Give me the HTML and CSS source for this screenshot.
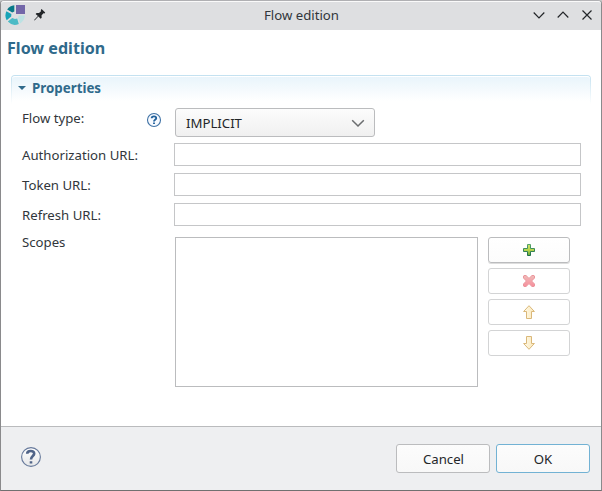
FILE: index.html
```html
<!DOCTYPE html>
<html lang="en">
<head>
<meta charset="utf-8">
<title>Flow edition</title>
<link rel="stylesheet" href="styles.css">
</head>
<body>
<div class="window">
  <header class="titlebar">
    <div class="title-left">
      <svg class="logo" width="20" height="20" viewBox="0 0 20 20">
        <path d="M2.2 4.4A9.8 9.8 0 0 1 9.3 .2V6.4L7.2 7.6Z" fill="#087988"/>
        <path d="M1.4 6.2L6.4 9L6.2 11.6L1.7 15.2A9.8 9.8 0 0 1 1.4 6.2Z" fill="#18a4b8"/>
        <path d="M2.8 16.6L7.2 13L10 14L12.2 13.5L13.8 19A9.8 9.8 0 0 1 2.8 16.6Z" fill="#4dbbc6"/>
        <path d="M13.8 10.6H19.9A9.8 9.8 0 0 1 15.2 18.4L13 13Z" fill="#bce2e3"/>
        <path d="M11 0H20V9H11Z" fill="#7367a9"/>
      </svg>
      <svg class="pin" width="12" height="12" viewBox="0 0 12 12">
        <path d="M7.6 0L11.2 3.4L10.5 4.4L9.4 4.3L7.5 6.5L7.7 8.8L6.6 9.8L4.4 7.6L.6 11.5L.1 11L3.9 7.1L1.6 4.9L2.6 3.9L5 4L7 2.2L6.8 1Z" fill="#232629"/>
      </svg>
    </div>
    <span class="title">Flow edition</span>
    <div class="title-right">
      <svg width="12" height="12" viewBox="0 0 12 12"><path d="M.7 3.5L6 8.8L11.3 3.5"/></svg>
      <svg width="12" height="12" viewBox="0 0 12 12"><path d="M.7 8.5L6 3.2L11.3 8.5"/></svg>
      <svg width="12" height="12" viewBox="0 0 12 12"><path d="M1.5 1.5L10.5 10.5M10.5 1.5L1.5 10.5"/></svg>
    </div>
  </header>
  <main class="content">
    <h1>Flow edition</h1>
    <section>
      <h2><i class="twisty"></i>Properties</h2>
      <div class="row row-type">
        <label>Flow type:</label>
        <svg class="hint" width="16" height="16" viewBox="0 0 16 16">
          <circle cx="8" cy="8" r="6.5" fill="#f7faff" stroke="#3f72a5" stroke-width="1.1"/>
          <path d="M5.7 6.2C5.7 3.8 10.3 3.7 10.2 6.1C10.1 7.7 8 7.7 8 9.4M8 10.4V12" fill="none" stroke="#23629c" stroke-width="1.9"/>
        </svg>
        <div class="select"><span>IMPLICIT</span>
          <svg width="14" height="14" viewBox="0 0 14 14"><path d="M1.2 4.2L7 10L12.8 4.2" fill="none" stroke="#6b6d6f" stroke-width="1.5"/></svg>
        </div>
      </div>
      <div class="row"><label>Authorization URL:</label><input type="text"></div>
      <div class="row"><label>Token URL:</label><input type="text"></div>
      <div class="row"><label>Refresh URL:</label><input type="text"></div>
      <div class="row row-scopes">
        <label>Scopes</label>
        <div class="list"></div>
        <div class="tools">
          <button class="tool active"><svg width="12" height="12" viewBox="0 0 12 12">
            <defs><linearGradient id="plus" x2="0" y2="1"><stop stop-color="#cbe06e"/><stop offset=".5" stop-color="#b9d54b"/><stop offset="1" stop-color="#63a33c"/></linearGradient><linearGradient id="plusEdge" x2="0" y2="1"><stop stop-color="#55a36a"/><stop offset="1" stop-color="#1c6f46"/></linearGradient></defs>
            <path d="M4.5.5H7.5V4.5H11.5V7.5H7.5V11.5H4.5V7.5H.5V4.5H4.5Z" fill="url(#plus)" stroke="url(#plusEdge)"/></svg></button>
          <button class="tool"><svg width="12" height="12" viewBox="0 0 12 12">
            <defs><linearGradient id="cross" x2="0" y2="1"><stop stop-color="#efbcb8"/><stop offset="1" stop-color="#f78e9c"/></linearGradient></defs>
            <path d="M1 .5H3L6 3.4L9 .5H11L11.5 1V3L8.6 6L11.5 9V11L11 11.5H9L6 8.6L3 11.5H1L.5 11V9L3.4 6L.5 3V1Z" fill="url(#cross)" stroke="#eb969d"/></svg></button>
          <button class="tool"><svg width="12" height="14" viewBox="0 0 12 14">
            <defs><linearGradient id="arrow"><stop stop-color="#fffbea"/><stop offset="1" stop-color="#fbe7b9"/></linearGradient></defs>
            <path d="M6 .7L11.4 6.5H8.5V13.5H3.5V6.5H.6Z" fill="url(#arrow)" stroke="#dab87a"/></svg></button>
          <button class="tool"><svg width="12" height="14" viewBox="0 0 12 14">
            <path d="M6 13.3L11.4 7.5H8.5V.5H3.5V7.5H.6Z" fill="url(#arrow)" stroke="#dab87a"/></svg></button>
        </div>
      </div>
    </section>
  </main>
  <footer>
    <svg class="help" width="20" height="20" viewBox="0 0 20 20">
      <defs><linearGradient id="helpFill" x2="0" y2="1"><stop stop-color="#fff"/><stop offset="1" stop-color="#e5e6e8"/></linearGradient></defs>
      <circle cx="10" cy="10" r="9.4" fill="url(#helpFill)" stroke="#66799b" stroke-width="1.1"/>
      <path d="M6.2 6.8C6.2 3.2 13.3 3 13.2 6.6C13.1 9.1 10 8.9 10 12.6M10 14.2V16.4" fill="none" stroke="#506488" stroke-width="2.6"/>
    </svg>
    <div class="actions">
      <button class="action cancel">Cancel</button>
      <button class="action default">OK</button>
    </div>
  </footer>
</div>
</body>
</html>
```

FILE: styles.css
```css
* { box-sizing: border-box; }
html, body { margin: 0; height: 100%; overflow: hidden; background: #c8c8c8; }
body { font: 13.2px/18px "Noto Sans", sans-serif; color: #31363b; }
svg { display: block; flex: none; }
.window {
  width: 602px; height: 491px; display: flex; flex-direction: column;
  border: 1px solid #8a8a8c; border-top-color: #b0b0b3; border-bottom-color: #707070;
  border-radius: 4px 4px 0 0; background: #fff; overflow: hidden;
}
.titlebar {
  height: 29px; flex: none; display: grid; grid-template-columns: 1fr auto 1fr;
  align-items: start; background: #dedfe1; border-top: 1px solid #fafafa;
  border-radius: 3px 3px 0 0;
}
.title-left { display: flex; align-items: flex-start; gap: 9px; padding: 3px 0 0 4px; }
.pin { margin-top: 4px; }
.title { line-height: 26px; padding-left: 1px; }
.title-right { display: flex; justify-content: flex-end; gap: 12px; padding: 7px 8px 0 0; }
.title-right path { fill: none; stroke: #232629; stroke-width: 1.2; }
.content { flex: 1; padding: 7px 10px 0; }
h1 { margin: 0 0 16px -4px; font-size: 16.1px; line-height: 22px; color: #2f6a8b; }
h2 {
  margin: 0 0 4px; height: 29px; padding: 3px 0 0 6px; display: flex; gap: 6px;
  font-size: 13.33px; line-height: 18px; color: #2f6a8b;
  border: 1px solid transparent; border-bottom: 0; border-radius: 4px 4px 0 0;
  background:
    linear-gradient(#e8f4fb, #fff 90%) padding-box,
    linear-gradient(#c3e1f0, #fff) border-box;
  box-shadow: inset 0 1px #fff;
}
.twisty { margin-top: 7px; width: 8px; height: 4px; background: #2f6a8b; clip-path: polygon(0 0, 100% 0, 50% 100%); }
.row { display: flex; padding-left: 11px; height: 30px; }
.row label { width: 152px; flex: none; padding-top: 3px; white-space: nowrap; }
.row-type { height: 35px; }
.row-type label { width: 124px; padding-top: 1px; }
.hint { margin: 4px 13px 0 0; }
.select {
  width: 200px; height: 29px; padding: 0 9px 0 10px; display: flex; align-items: center;
  justify-content: space-between; border: 1px solid #bbbcbe; border-radius: 3px;
  background: linear-gradient(#fcfcfc, #f0f0f0); color: #232629;
}
.row input { width: 407px; height: 23px; padding: 0 4px; border: 1px solid #c5c6c8; background: #fff; }
.row-scopes { height: 150px; margin-top: 4px; }
.row-scopes label { width: 153px; padding-top: 0; margin-top: -4px; }
.list { width: 303px; height: 150px; border: 1px solid #bbbcbe; }
.tools { margin-left: 10px; display: flex; flex-direction: column; gap: 5px; }
.tool {
  width: 82px; height: 26px; padding: 0; display: flex; align-items: center; justify-content: center;
  border: 1px solid #d3d4d5; border-radius: 3px; background: #fff;
}
.tool.active { border-color: #bbbcbe; box-shadow: 0 1px #ddd; background: linear-gradient(#fff, #fcfcfc); }
footer {
  height: 64px; flex: none; display: flex; justify-content: space-between; align-items: flex-start;
  padding: 17px 11px 0 20px; border-top: 1px solid #babbbd; background: #eeeff1;
}
.help { margin-top: 3px; }
.actions { display: flex; gap: 6px; }
.action {
  width: 94px; height: 29px; padding: 0; font: inherit; color: #232629;
  border: 1px solid #bbbcbe; border-radius: 3px; background: linear-gradient(#fcfcfc, #f8f8f8);
}
.action.cancel { padding-left: 1px; }
.action.default { border-color: #72b2d4; }
```
